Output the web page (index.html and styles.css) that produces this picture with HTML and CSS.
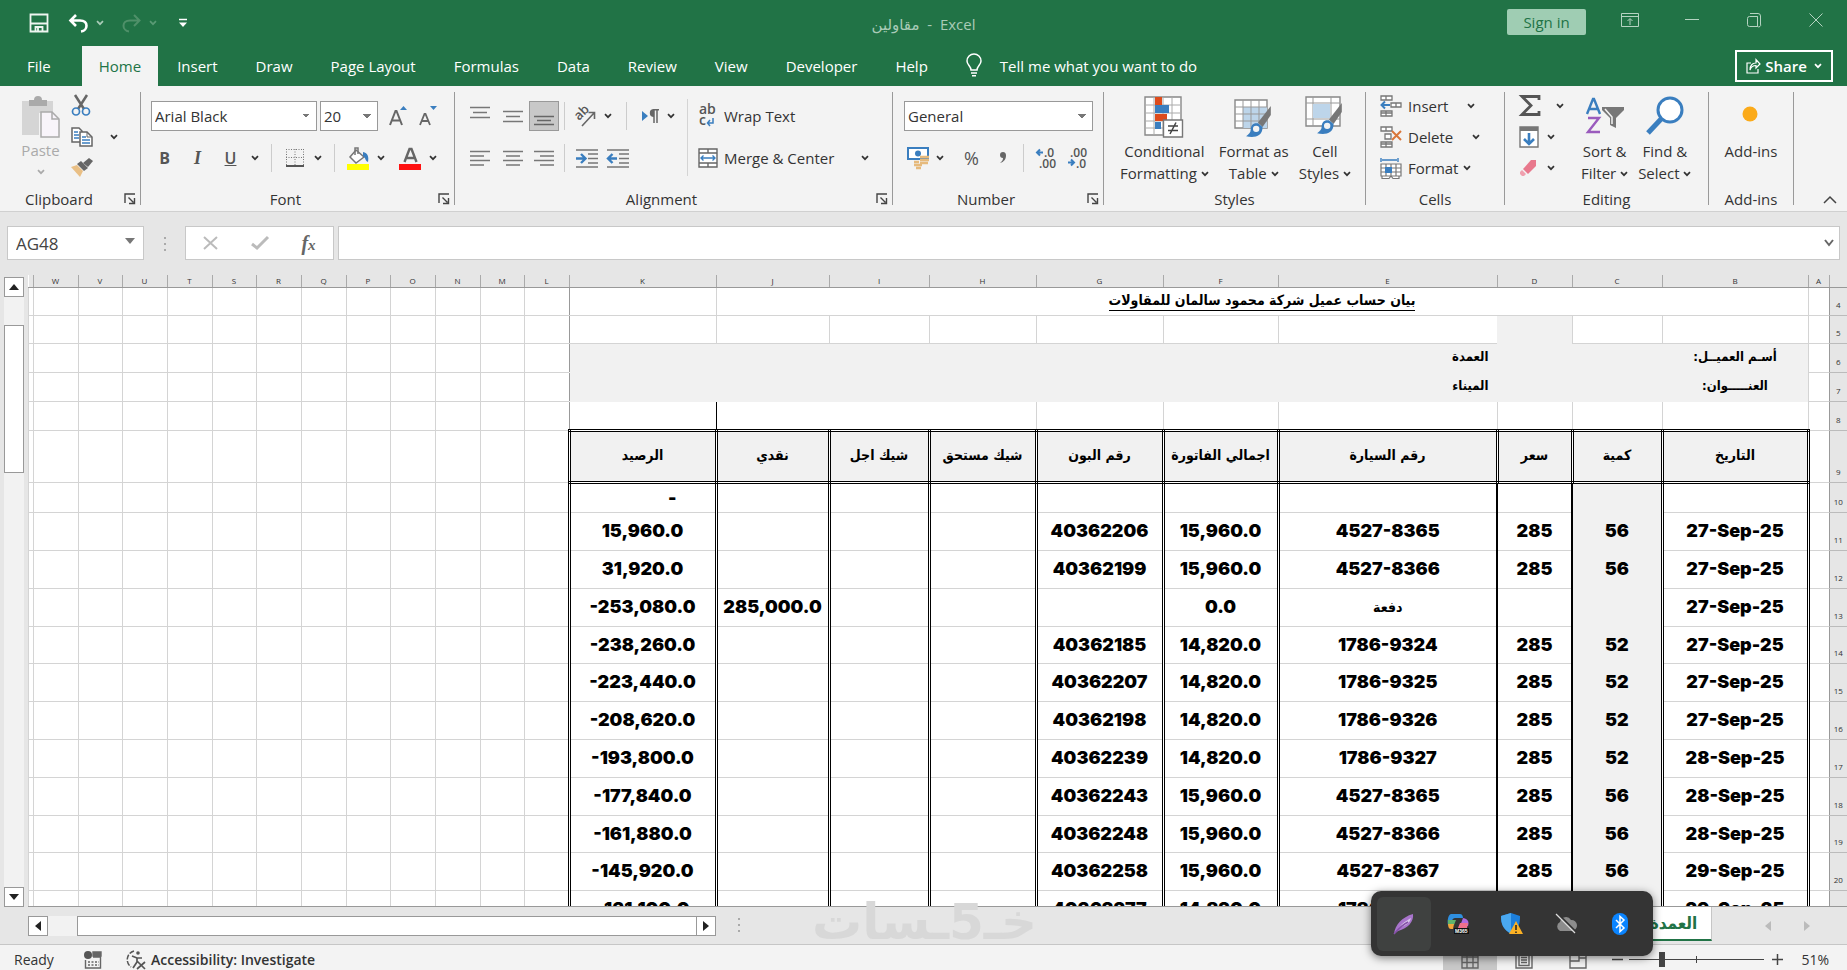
FILE: index.html
```html
<!DOCTYPE html>
<html lang="en">
<head>
    <meta charset="UTF-8">
    <meta name="viewport" content="width=device-width, initial-scale=1.0">
    <title>مقاولين - Excel</title>
    <link rel="stylesheet" href="styles.css">
</head>
<body>
    <svg class="defs" aria-hidden="true">
        <symbol id="caret" viewBox="0 0 8 6"><path d="M1 1.2l3 3 3-3" fill="none" stroke="currentColor" stroke-width="1.7"/></symbol>
        <symbol id="launcher" viewBox="0 0 12 12"><path d="M1 10V1h10M4.500 4.500l5 5M10.500 5v5.500H5" fill="none" stroke="#444" stroke-width="1.4"/></symbol>
        <symbol id="brush" viewBox="0 0 30 36">
            <path d="M29 1L15 19l5 5 9-13z" fill="#777"/>
            <path d="M15 20c-5-1-8 2-8 7 0 3-2 5-5 7 8 2 18 1 18-10z" fill="#3a7ebf"/>
            <circle cx="13" cy="26" r="3.500" fill="#f3f3f3"/>
        </symbol>
    </svg>

    <header class="titlebar">
        <div class="quick">
            <button class="qbtn" aria-label="Save"><svg width="20" height="20" viewBox="0 0 20 20"><path d="M1.500 1.500h17v17h-17zM2 10.500h16M6.500 18v-4h7v4M9 15v3" fill="none" stroke="#eef5f0" stroke-width="1.800"/></svg></button>
            <button class="qbtn" aria-label="Undo"><svg width="21" height="19" viewBox="0 0 21 19"><path d="M8 1L2.500 6.500 8 12M3 6.500h9c9 0 8 10 1 11" fill="none" stroke="#fff" stroke-width="2.600"/></svg></button>
            <svg class="caret light"><use href="#caret"/></svg>
            <button class="qbtn" aria-label="Redo"><svg width="21" height="19" viewBox="0 0 21 19"><path d="M13 1l5.500 5.500L13 12M18 6.500H9C0 6.500 1 16.500 8 17.500" fill="none" stroke="#4f9069" stroke-width="2"/></svg></button>
            <svg class="caret dim"><use href="#caret"/></svg>
            <button class="qbtn last" aria-label="Customize"><svg width="8" height="10" viewBox="0 0 8 10"><path d="M0 1.500h8" stroke="#fff" stroke-width="1.500"/><path d="M0 4.500h8L4 9z" fill="#fff"/></svg></button>
        </div>
        <div class="doc-title">مقاولين&nbsp; -&nbsp; Excel</div>
        <div class="win">
            <button class="signin">Sign in</button>
            <button class="wbtn" aria-label="Ribbon options"><svg width="18" height="14" viewBox="0 0 18 14"><path d="M.5.5h17v13H.5zM1 3.500h16M9 12V6M6.500 8L9 5.500 11.500 8" fill="none" stroke="#b5d3c1"/></svg></button>
            <button class="wbtn" aria-label="Minimize"><svg width="14" height="14" viewBox="0 0 14 14"><path d="M0 6.500h14" stroke="#b5d3c1"/></svg></button>
            <button class="wbtn" aria-label="Restore"><svg width="14" height="14" viewBox="0 0 14 14"><path d="M2.500 3.500h8v10h-8a2 2 0 0 1-2-2v-6a2 2 0 0 1 2-2zM3 .5h8a2.500 2.500 0 0 1 2.500 2.500v8a2 2 0 0 1-3 2.500v-10" fill="none" stroke="#b5d3c1"/></svg></button>
            <button class="wbtn" aria-label="Close"><svg width="14" height="14" viewBox="0 0 14 14"><path d="M.5.5l13 13M13.500.5l-13 13" stroke="#b5d3c1"/></svg></button>
        </div>
    </header>

    <nav class="tabs">
        <button class="tab file">File</button>
        <button class="tab active">Home</button>
        <button class="tab">Insert</button>
        <button class="tab">Draw</button>
        <button class="tab">Page Layout</button>
        <button class="tab">Formulas</button>
        <button class="tab">Data</button>
        <button class="tab">Review</button>
        <button class="tab">View</button>
        <button class="tab">Developer</button>
        <button class="tab">Help</button>
        <button class="tell"><svg width="16" height="23" viewBox="0 0 16 23"><path d="M5 16c0-4-4-5-4-9a7 7 0 0 1 14 0c0 4-4 5-4 9zM5 19h6M6 21.800h4" fill="none" stroke="#fff" stroke-width="1.500"/></svg>Tell me what you want to do</button>
        <button class="share"><svg width="15" height="16" viewBox="0 0 15 16"><path d="M5 5H1v10h11v-4M4 12c0-5 3-7 6-7V1.500L14 6l-4 4V7.500C7 7.500 5 9 4 12z" fill="none" stroke="#fff" stroke-width="1.200"/></svg>Share<svg class="caret"><use href="#caret"/></svg></button>
    </nav>

    <section class="ribbon">
        <div class="group clipboard">
            <div class="tools">
                <button class="paste">
                    <svg width="39" height="42" viewBox="0 0 39 42"><path d="M1 5h31v12H18v22H1z" fill="#d5d5d5"/><path d="M8 4h5a4 4 0 0 1 8 0h5v6H8z" fill="#aaa"/><path d="M20 16h11l7 7v18H20z" fill="#f8f4fa" stroke="#aaa" stroke-width="1.500"/><path d="M31 16v7h7" fill="none" stroke="#aaa" stroke-width="1.500"/></svg>
                    <span>Paste</span>
                    <svg class="caret"><use href="#caret"/></svg>
                </button>
                <div class="stack">
                    <button class="mini" aria-label="Cut"><svg width="20" height="21" viewBox="0 0 20 21"><path d="M4 0l9 14M16 0L7 14" stroke="#666" stroke-width="2.500"/><circle cx="5" cy="16.500" r="3.500" fill="none" stroke="#3a7ebf" stroke-width="1.700"/><circle cx="15" cy="16.500" r="3.500" fill="none" stroke="#3a7ebf" stroke-width="1.700"/></svg></button>
                    <button class="mini copy" aria-label="Copy"><svg width="22" height="20" viewBox="0 0 22 20"><path d="M1 1h7l3 3v11H1z" fill="#fff" stroke="#666" stroke-width="1.500"/><path d="M3 5h4M3 8h5M3 11h5" stroke="#3a7ebf" stroke-width="1.300"/><path d="M9 5h7l5 5v9H9z" fill="#fff" stroke="#666" stroke-width="1.500"/><path d="M16 5v5h5" fill="none" stroke="#666"/><path d="M11 10h4M11 13h8M11 16h8" stroke="#3a7ebf" stroke-width="1.300"/></svg><svg class="caret"><use href="#caret"/></svg></button>
                    <button class="mini" aria-label="Format Painter"><svg width="22" height="19" viewBox="0 0 22 19"><path d="M18 0l4 3-5 6-5-4z" fill="#666"/><path d="M10 3l7 7-4 3-7-7z" fill="#666"/><path d="M6 7l6 6-3 6L0 9z" fill="#e9bf85"/></svg></button>
                </div>
            </div>
            <div class="label">Clipboard<button class="launch" aria-label="Clipboard settings"><svg><use href="#launcher"/></svg></button></div>
        </div>

        <div class="group font">
            <div class="tools rows">
                <div class="row">
                    <select class="combo font-name" aria-label="Font"><option>Arial Black</option></select>
                    <select class="combo font-size" aria-label="Font size"><option>20</option></select>
                    <button class="tool" aria-label="Grow font"><svg width="18" height="22" viewBox="0 0 18 22"><path d="M1 20L6.500 6h1L13 20M3.500 15.500h7" fill="none" stroke="#666" stroke-width="2"/><path d="M11 5l3.500-4L18 5z" fill="#3a7ebf"/></svg></button>
                    <button class="tool" aria-label="Shrink font"><svg width="18" height="22" viewBox="0 0 18 22"><path d="M1 20L5.500 9h1L11 20M3 16h6" fill="none" stroke="#666" stroke-width="1.800"/><path d="M11 1l3.500 4L18 1z" fill="#3a7ebf"/></svg></button>
                </div>
                <div class="row">
                    <button class="tool wide bold">B</button>
                    <button class="tool wide italic">I</button>
                    <button class="tool wide under">U</button>
                    <svg class="caret"><use href="#caret"/></svg>
                    <i class="sep"></i>
                    <button class="tool" aria-label="Borders"><svg width="18" height="18" viewBox="0 0 18 18"><path d="M.5 0v16M17.500 0v16M0 .5h18M9 0v16M0 8.500h18" fill="none" stroke="#777" stroke-dasharray="1 1.500"/><path d="M0 17h18" stroke="#555" stroke-width="2"/></svg></button>
                    <svg class="caret"><use href="#caret"/></svg>
                    <i class="sep"></i>
                    <button class="tool" aria-label="Fill color"><svg width="23" height="23" viewBox="0 0 23 23"><path d="M9 3l8 7-8 6-6-6z" fill="#fff" stroke="#777" stroke-width="1.500"/><path d="M8 8V1h3v6" fill="none" stroke="#777" stroke-width="1.500"/><path d="M16 5c5 1 6 5 5 10-3-1-2-4-5-6z" fill="#3a7ebf"/><path d="M0 17h22v6H0z" fill="#ff0"/></svg></button>
                    <svg class="caret"><use href="#caret"/></svg>
                    <i class="gap"></i>
                    <button class="tool" aria-label="Font color"><svg width="23" height="23" viewBox="0 0 23 23"><path d="M5.500 15L10.500 2h2l5 13M8 11h7" fill="none" stroke="#666" stroke-width="2.400"/><path d="M0 17h22v6H0z" fill="#f11"/></svg></button>
                    <svg class="caret"><use href="#caret"/></svg>
                </div>
            </div>
            <div class="label">Font<button class="launch" aria-label="Font settings"><svg><use href="#launcher"/></svg></button></div>
        </div>

        <div class="group align">
            <div class="tools">
                <div class="rows">
                    <div class="row">
                        <button class="tool wide" aria-label="Top align"><svg width="20" height="20" viewBox="0 0 20 20"><path d="M0 1.500h20M3 6.500h14M0 11.500h20" stroke="#777" stroke-width="1.500"/></svg></button>
                        <button class="tool wide" aria-label="Middle align"><svg width="20" height="20" viewBox="0 0 20 20"><path d="M0 5.500h20M3 10.500h14M0 15.500h20" stroke="#777" stroke-width="1.500"/></svg></button>
                        <button class="tool pressed" aria-label="Bottom align"><svg width="20" height="20" viewBox="0 0 20 20"><path d="M0 10.500h20M3 14.500h14M0 18.500h20" stroke="#666" stroke-width="1.500"/></svg></button>
                        <i class="sep thin"></i>
                        <button class="tool" aria-label="Orientation"><svg width="24" height="24" viewBox="0 0 24 24"><text x="6" y="17" transform="rotate(-45 6 17)" class="icon-text" font-size="13">ab</text><path d="M9 22L21 9M15.500 8.500h6V15" fill="none" stroke="#666" stroke-width="1.600"/></svg></button>
                        <svg class="caret"><use href="#caret"/></svg>
                        <i class="sep"></i>
                        <button class="tool narrow" aria-label="Text direction"><svg width="17" height="14" viewBox="0 0 17 14"><path d="M0 2l6 5-6 5z" fill="#3a7ebf"/><path d="M12 0a4 3.800 0 0 0 0 8z" fill="#666"/><path d="M12 .7h5M12 0v14M15 0v14" stroke="#666" stroke-width="1.500"/></svg></button>
                        <svg class="caret"><use href="#caret"/></svg>
                    </div>
                    <div class="row">
                        <button class="tool wide" aria-label="Align left"><svg width="20" height="16" viewBox="0 0 20 16"><path d="M0 1.500h20M0 6h14M0 10.500h20M0 15h14" stroke="#777" stroke-width="1.500"/></svg></button>
                        <button class="tool wide" aria-label="Center"><svg width="20" height="16" viewBox="0 0 20 16"><path d="M0 1.500h20M3 6h14M0 10.500h20M3 15h14" stroke="#777" stroke-width="1.500"/></svg></button>
                        <button class="tool" aria-label="Align right"><svg width="20" height="16" viewBox="0 0 20 16"><path d="M0 1.500h20M6 6h14M0 10.500h20M6 15h14" stroke="#777" stroke-width="1.500"/></svg></button>
                        <i class="sep thin"></i>
                        <button class="tool wide" aria-label="Decrease indent"><svg width="22" height="19" viewBox="0 0 22 19"><path d="M0 1h22M12 5h10M12 9.500h10M12 14h10M0 18h22" stroke="#777" stroke-width="1.500"/><path d="M0 9.500h8M5 5l4.500 4.500L5 14" fill="none" stroke="#3a7ebf" stroke-width="2.400"/></svg></button>
                        <button class="tool" aria-label="Increase indent"><svg width="22" height="19" viewBox="0 0 22 19"><path d="M0 1h22M12 5h10M12 9.500h10M12 14h10M0 18h22" stroke="#777" stroke-width="1.500"/><path d="M2 9.500h8M5.500 5L1 9.500 5.500 14" fill="none" stroke="#3a7ebf" stroke-width="2.400"/></svg></button>
                    </div>
                </div>
                <div class="rows wrap">
                    <button class="text-tool"><svg width="20" height="22" viewBox="0 0 20 22"><text x="1" y="9" class="icon-text" font-size="14">ab</text><text x="1" y="20" class="icon-text" font-size="14">c</text><path d="M15 13v5H10M12 15l-2.500 3 2.500 3" fill="none" stroke="#3a7ebf" stroke-width="1.500"/></svg>Wrap Text</button>
                    <button class="text-tool"><svg width="20" height="20" viewBox="0 0 20 20"><path d="M1 1h18v18H1zM1 5h18M1 15h18M10 1v4M10 15v4" fill="#fff" stroke="#666" stroke-width="1.400"/><path d="M3 10h14M5.500 7.500L3 10l2.500 2.500M14.500 7.500L17 10l-2.500 2.500" fill="none" stroke="#3a7ebf" stroke-width="1.400"/></svg>Merge &amp; Center<svg class="caret far"><use href="#caret"/></svg></button>
                </div>
            </div>
            <div class="label">Alignment<button class="launch" aria-label="Alignment settings"><svg><use href="#launcher"/></svg></button></div>
        </div>

        <div class="group number">
            <div class="tools rows">
                <div class="row">
                    <select class="combo format" aria-label="Number format"><option>General</option></select>
                </div>
                <div class="row">
                    <button class="tool" aria-label="Accounting format"><svg width="23" height="22" viewBox="0 0 23 22"><path d="M1 1h20v11H1z" fill="#fff" stroke="#3a7ebf" stroke-width="2"/><circle cx="11" cy="6.500" r="3" fill="#3a7ebf"/><path d="M13 10h9M13 13h9M13 16h8M7 15h5M7 18h8M9 21h5" stroke="#e6ba7c" stroke-width="2.400"/></svg></button>
                    <svg class="caret"><use href="#caret"/></svg>
                    <button class="tool wide percent">%</button>
                    <button class="tool" aria-label="Comma style"><svg width="8" height="12" viewBox="0 0 8 12"><path d="M4 0a3 3 0 1 0 0 6c0 2-1 3.500-3 5 4-1 6-4 6-7.500C7 1.500 6 0 4 0z" fill="#666"/></svg></button>
                    <i class="sep thin"></i>
                    <button class="tool wide" aria-label="Increase decimal"><svg width="20" height="20" viewBox="0 0 20 20"><path d="M1 4.500h6M4 1.500L1 4.500l3 3" fill="none" stroke="#3a7ebf" stroke-width="2"/><text x="8" y="9" class="icon-text" font-size="12">.0</text><text x="3" y="20" class="icon-text" font-size="12">.00</text></svg></button>
                    <button class="tool" aria-label="Decrease decimal"><svg width="20" height="20" viewBox="0 0 20 20"><path d="M1 14.500h6M4 11.500l3 3-3 3" fill="none" stroke="#3a7ebf" stroke-width="2"/><text x="3" y="9" class="icon-text" font-size="12">.00</text><text x="9" y="20" class="icon-text" font-size="12">.0</text></svg></button>
                </div>
            </div>
            <div class="label">Number<button class="launch" aria-label="Number settings"><svg><use href="#launcher"/></svg></button></div>
        </div>

        <div class="group styles">
            <div class="tools">
                <button class="big">
                    <svg width="40" height="42" viewBox="0 0 40 42"><path d="M1 1h36v38H1z" fill="#fff" stroke="#888" stroke-width="1.400"/><path d="M1 9h36M1 17h36M1 25h36M1 32h36M10 1v38M19 1v38M28 1v38" stroke="#aaa"/><path d="M11 1h7v8h-7zM11 18h12v7H11z" fill="#dd4b1c"/><path d="M11 9h14v8H11zM11 26h6v7h-6z" fill="#3a7ebf"/><path d="M19.500 24h19v17h-19z" fill="#fff" stroke="#777" stroke-width="1.400"/><path d="M24 30h10M24 34.500h10M32 26.500l-6 11.500" stroke="#444" stroke-width="1.500"/></svg>
                    <span>Conditional<br>Formatting <svg class="caret"><use href="#caret"/></svg></span>
                </button>
                <button class="big">
                    <svg width="40" height="42" viewBox="0 0 40 42"><path d="M1 4h32v28H1z" fill="#fff" stroke="#888" stroke-width="1.400"/><path d="M9 11h24v21H9z" fill="#bdd5ea"/><path d="M1 11h32M1 18h32M1 25h32M9 4v28M17 4v28M25 4v28" stroke="#999"/><use href="#brush" x="9" y="9" width="30" height="33"/></svg>
                    <span>Format as<br>Table <svg class="caret"><use href="#caret"/></svg></span>
                </button>
                <button class="big">
                    <svg width="40" height="42" viewBox="0 0 40 42"><path d="M1 1h34v29H1z" fill="#fff" stroke="#888" stroke-width="1.400"/><path d="M1 7h34M1 23h34M8 1v29M26 1v29" stroke="#999"/><path d="M8 8h17v14H8z" fill="#bdd5ea"/><use href="#brush" x="9" y="6" width="30" height="33"/></svg>
                    <span>Cell<br>Styles <svg class="caret"><use href="#caret"/></svg></span>
                </button>
            </div>
            <div class="label">Styles</div>
        </div>

        <div class="group cells">
            <div class="tools stack">
                <button class="text-tool"><svg width="22" height="22" viewBox="0 0 22 22"><path d="M1 5V1h11v4zM6 1v4M1 21v-5h11v5zM6 16v5M1 18h11M11 8h10v4H11zM16 8v4" fill="#fff" stroke="#777" stroke-width="1.300"/><path d="M1 10h9M5 6.500L1.500 10 5 13.500" fill="none" stroke="#3a7ebf" stroke-width="2"/></svg>Insert<svg class="caret far"><use href="#caret"/></svg></button>
                <button class="text-tool"><svg width="22" height="22" viewBox="0 0 22 22"><path d="M1 5V1h11v4zM6 1v4M1 21v-5h11v5zM6 16v5M1 18h11M5 8h6v5H5z" fill="#fff" stroke="#777" stroke-width="1.300"/><path d="M12 5l9 9M21 5l-9 9" stroke="#d9763a" stroke-width="2"/></svg>Delete<svg class="caret far"><use href="#caret"/></svg></button>
                <button class="text-tool"><svg width="22" height="22" viewBox="0 0 22 22"><path d="M1 1v4M18 1v4M2 3h15" stroke="#3a7ebf" stroke-width="1.400"/><path d="M1 7h20v12H1zM1 11h20M1 15h20M6 7v12M11 7v12M16 7v12M2 19v2.500h7L11 19l2 2.500h6V19" fill="#fff" stroke="#777" stroke-width="1.200"/><path d="M5 10h7v6H5z" fill="#3a7ebf"/></svg>Format<svg class="caret near"><use href="#caret"/></svg></button>
            </div>
            <div class="label">Cells</div>
        </div>

        <div class="group editing">
            <div class="tools">
                <div class="stack">
                    <button class="mini" aria-label="AutoSum"><svg width="22" height="21" viewBox="0 0 22 21"><path d="M20 5V1.500H3L12 10.500 3 19.500h17V16" fill="none" stroke="#555" stroke-width="2.800"/></svg><svg class="caret far"><use href="#caret"/></svg></button>
                    <button class="mini" aria-label="Fill"><svg width="20" height="22" viewBox="0 0 20 22"><path d="M1 1h18v20H1z" fill="#fff" stroke="#777" stroke-width="1.400"/><path d="M1 1h18v4H1z" fill="#777"/><path d="M10 7v11M5 13l5 5 5-5" fill="none" stroke="#3a7ebf" stroke-width="2.600"/></svg><svg class="caret mid"><use href="#caret"/></svg></button>
                    <button class="mini" aria-label="Clear"><svg width="20" height="18" viewBox="0 0 20 18"><path d="M12 1h5v6l-8 8-5-5z" fill="#e8788c"/><path d="M3 11l4 4-2 2H3l-2-2v-2z" fill="#efa0ae"/></svg><svg class="caret mid"><use href="#caret"/></svg></button>
                </div>
                <button class="big">
                    <svg width="40" height="42" viewBox="0 0 40 42"><path d="M2 18L8 3h1l6 15M4.500 13h8" fill="none" stroke="#3a7ebf" stroke-width="2.400"/><path d="M3 22h11L3 36h12" fill="none" stroke="#9a5bbd" stroke-width="2.400"/><path d="M17 11h22v3l-8 8v10l-6-3v-7l-8-8z" fill="#777"/><path d="M20 13l7 8v7" fill="none" stroke="#f3f3f3" stroke-width="1.500"/></svg>
                    <span>Sort &amp;<br>Filter <svg class="caret"><use href="#caret"/></svg></span>
                </button>
                <button class="big">
                    <svg width="40" height="42" viewBox="0 0 40 42"><circle cx="25" cy="14" r="12" fill="#fff" stroke="#3a7ebf" stroke-width="3"/><path d="M17 22L3 37" stroke="#3a7ebf" stroke-width="5"/></svg>
                    <span>Find &amp;<br>Select <svg class="caret"><use href="#caret"/></svg></span>
                </button>
            </div>
            <div class="label">Editing</div>
        </div>

        <div class="group addins">
            <div class="tools">
                <button class="big">
                    <svg width="40" height="42" viewBox="0 0 40 42"><circle cx="19" cy="18" r="7.500" fill="#fbaa19"/></svg>
                    <span>Add-ins</span>
                </button>
            </div>
            <div class="label">Add-ins</div>
        </div>
        <button class="collapse" aria-label="Collapse ribbon"><svg width="14" height="8" viewBox="0 0 14 8"><path d="M1 7l6-6 6 6" fill="none" stroke="#444" stroke-width="1.500"/></svg></button>
    </section>

    <section class="formula">
        <div class="namebox"><input type="text" value="AG48" aria-label="Name box"><button aria-label="Names"><svg width="10" height="6" viewBox="0 0 10 6"><path d="M0 0h10L5 6z" fill="#777"/></svg></button></div>
        <div class="dots"></div>
        <div class="fx">
            <button aria-label="Cancel"><svg width="15" height="14" viewBox="0 0 15 14"><path d="M1 1l13 12M14 1L1 13" stroke="#bbb" stroke-width="2"/></svg></button>
            <button aria-label="Enter"><svg width="18" height="14" viewBox="0 0 18 14"><path d="M1 8l5 4L17 1" fill="none" stroke="#bbb" stroke-width="3"/></svg></button>
            <button class="fn">f<small>x</small></button>
        </div>
        <div class="formula-input"><input type="text" aria-label="Formula bar"><button aria-label="Expand"><svg width="10" height="8" viewBox="0 0 10 8"><path d="M1 1l4 5 4-5" fill="none" stroke="#666" stroke-width="2"/></svg></button></div>
    </section>

    <main class="workspace">
        <div class="vscroll">
            <button aria-label="Scroll up"><svg width="10" height="6" viewBox="0 0 10 6"><path d="M0 6h10L5 0z" fill="#222"/></svg></button>
            <div class="vtrack"><div class="vthumb"></div></div>
            <button aria-label="Scroll down"><svg width="10" height="6" viewBox="0 0 10 6"><path d="M0 0h10L5 6z" fill="#222"/></svg></button>
        </div>
        <div class="sheet" dir="rtl">
            <table id="grid"></table>
        </div>
    </main>

    <section class="sheetbar">
        <div class="hscroll">
            <button aria-label="Scroll left"><svg width="6" height="10" viewBox="0 0 6 10"><path d="M6 0v10L0 5z" fill="#222"/></svg></button>
            <div class="htrack"><div class="hthumb"></div></div>
            <button aria-label="Scroll right"><svg width="6" height="10" viewBox="0 0 6 10"><path d="M0 0v10l6-5z" fill="#222"/></svg></button>
        </div>
        <div class="dots"></div>
        <div class="watermark" dir="rtl">خـ5ـسات</div>
        <button class="sheet-tab">العمدة</button>
        <div class="sheet-nav">
            <svg width="6" height="10" viewBox="0 0 6 10"><path d="M6 0v10L0 5z" fill="#bbb"/></svg>
            <svg width="6" height="10" viewBox="0 0 6 10"><path d="M0 0v10l6-5z" fill="#bbb"/></svg>
        </div>
    </section>

    <footer class="status">
        <span class="ready">Ready</span>
        <svg width="18" height="18" viewBox="0 0 18 18"><circle cx="4" cy="4" r="4" fill="#555"/><path d="M9 1h8v4H9zM1.500 9v8h15V6H9" fill="none" stroke="#666" stroke-width="1.400"/><path d="M9 1h8v4H9z" fill="#666"/><path d="M4 11h11M4 14h11" stroke="#666" stroke-width="1.500" stroke-dasharray="2 1.500"/></svg>
        <button class="access"><svg width="20" height="20" viewBox="0 0 20 20"><path d="M8 1A9 9 0 0 0 5 17" fill="none" stroke="#555" stroke-width="1.500" stroke-dasharray="5 1.500"/><circle cx="12" cy="3" r="1.800" fill="#555"/><path d="M6 6l5 2h5M11 8v4l-4 6M11 11l8 8M19 12l-8 7" fill="none" stroke="#555" stroke-width="1.700"/></svg>Accessibility: Investigate</button>
        <div class="views">
            <button class="view on" aria-label="Normal"><svg width="18" height="18" viewBox="0 0 18 18"><path d="M1 1h16v16H1zM1 6h16M1 11.500h16M6 1v16M12 1v16" fill="none" stroke="#666" stroke-width="1.400"/></svg></button>
            <button class="view" aria-label="Page layout"><svg width="18" height="18" viewBox="0 0 18 18"><path d="M1 1h16v16H1zM4 3.500h10v11H4zM6 6.500h6M6 9h6M6 11.500h6" fill="none" stroke="#666" stroke-width="1.400"/></svg></button>
            <button class="view" aria-label="Page break"><svg width="18" height="18" viewBox="0 0 18 18"><path d="M1 1h16v16H1zM1 10h9V1M10 7h7" fill="none" stroke="#666" stroke-width="1.400"/></svg></button>
        </div>
        <button class="zbtn" aria-label="Zoom out"><svg width="11" height="11" viewBox="0 0 11 11"><path d="M0 5.500h11" stroke="#444" stroke-width="1.500"/></svg></button>
        <input class="zoom" type="range" min="0" max="100" value="23" aria-label="Zoom">
        <button class="zbtn" aria-label="Zoom in"><svg width="11" height="11" viewBox="0 0 11 11"><path d="M0 5.500h11M5.500 0v11" stroke="#444" stroke-width="1.500"/></svg></button>
        <span class="percent-label">51%</span>
    </footer>

    <div class="tray">
        <button class="on" aria-label="Feather"><svg width="22" height="22" viewBox="0 0 22 22"><path d="M1 21C2 12 9 4 20 1c1 8-5 14-15 17z" fill="#a874cc"/><path d="M6 15C9 10 13 8 18 5c-1 5-6 8-12 10z" fill="#d6c8e8"/><path d="M1 21C6 15 11 11 15 9" fill="none" stroke="#8550a8" stroke-width="1.500"/></svg></button>
        <button aria-label="Copilot"><svg width="22" height="22" viewBox="0 0 22 22"><path d="M4 1h9c2 0 3 2 3 4H8c-3 0-3 4-7 7C0 8 1 2 4 1z" fill="#2f8fe0"/><path d="M1 7h8l-2 5H1z" fill="#5fb46c"/><path d="M1 11h6l-1 5H4c-2 0-3-2-3-5z" fill="#f0a63c"/><path d="M16 5c6 1 6 5 5 8h-8z" fill="#b06be0"/><path d="M13 10h8l-1 5h-9z" fill="#f0708c"/><path d="M7 15h15v6H7z" fill="#111"/><text x="8" y="20" font-size="5" class="m365">M365</text></svg></button>
        <button aria-label="Security"><svg width="22" height="22" viewBox="0 0 22 22"><path d="M10 0l9 3c0 8-1 13-9 18C2 16 0 11 0 3z" fill="#1c7fdc"/><path d="M10 0v21C2 16 0 11 0 3z" fill="#4aa8f0"/><path d="M15 8l7 13H8z" fill="#fbb124"/><path d="M15 12v5M15 18.500v1.500" stroke="#222" stroke-width="1.500"/></svg></button>
        <button aria-label="Cloud sync off"><svg width="22" height="22" viewBox="0 0 22 22"><path d="M5 18a5 5 0 0 1 0-9 6 6 0 0 1 11-2 5.500 5.500 0 0 1 1 11z" fill="#8c8c8c"/><path d="M3 1l19 19" stroke="#333" stroke-width="2"/><path d="M1 1l19 19" stroke="#ddd" stroke-width="1.300"/></svg></button>
        <button aria-label="Bluetooth"><svg width="18" height="22" viewBox="0 0 18 22"><rect x="1" width="16" height="22" rx="8" fill="#0a84ff"/><path d="M5 7l8 8-4 3.500v-15L13 7l-8 8" fill="none" stroke="#fff" stroke-width="1.500"/></svg></button>
    </div>
    <script src="script.js"></script>
</body>
</html>
```

FILE: styles.css
```css
* { box-sizing: border-box; }
body {
    margin: 0;
    height: 100vh;
    display: flex;
    flex-direction: column;
    overflow: hidden;
    font-family: "Open Sans", "Noto Sans", "DejaVu Sans", sans-serif;
    font-size: 15px;
    color: #333;
    background: #e6e6e6;
}
button {
    font: inherit;
    color: inherit;
    background: none;
    border: 0;
    padding: 0;
    display: flex;
    align-items: center;
    justify-content: center;
    white-space: nowrap;
}
svg { overflow: visible; }
.defs { position: absolute; width: 0; height: 0; }
.caret { width: 8px; height: 6px; margin: 0 4px; flex: none; }
.caret.light { color: #a9cbb7; }
.caret.dim { color: #5a9a75; }

/* title bar */
.titlebar {
    height: 46px;
    background: #217346;
    display: grid;
    grid-template-columns: 1fr auto 1fr;
}
.quick { display: flex; align-items: center; padding: 0 0 2px 28px; }
.qbtn { width: 22px; margin-right: 17px; }
.qbtn + .caret { margin-left: -10px; margin-right: 16px; }
.qbtn.last { margin-left: -1px; }
.doc-title { line-height: 48px; color: #a9cbb7; font-size: 15px; }
.win { display: flex; justify-content: flex-end; align-items: flex-start; }
.signin {
    width: 79px;
    height: 26px;
    margin: 9px 13px 0 0;
    border-radius: 2px;
    background: #9fcdb3;
    color: #217346;
}
.wbtn { width: 62px; height: 40px; }

/* tabs */
.tabs { height: 40px; background: #217346; display: flex; color: #fff; padding-bottom: 1px; }
.tab { padding: 0 19px; }
.tab.file { padding: 0 31px 0 27px; }
.tab.active { background: #f3f3f3; color: #217346; padding: 0 17px; margin-bottom: -1px; }
.tell { gap: 18px; padding-left: 19px; }
.share {
    width: 98px;
    height: 32px;
    margin: 4px 14px 0 auto;
    border: 2px solid #fff;
    gap: 4px;
    font-weight: 600;
}
.share .caret { margin: 0 0 0 3px; }

/* ribbon */
.ribbon {
    height: 126px;
    flex: none;
    display: flex;
    background: #f3f3f3;
    border-bottom: 1px solid #d0d0d0;
    padding: 6px 0;
}
.group {
    display: flex;
    flex-direction: column;
    border-right: 1px solid #999;
    flex: none;
}
.tools { flex: 1; display: flex; }
.rows { display: flex; flex-direction: column; padding-top: 9px; gap: 12px; }
.row { display: flex; align-items: center; height: 30px; }
.label {
    position: relative;
    height: 20px;
    line-height: 20px;
    margin-bottom: -4px;
    text-align: center;
}
.launch { position: absolute; right: 4px; top: 4px; }
.launch svg { width: 12px; height: 12px; }
.tool { width: 30px; height: 30px; flex: none; }
.tool.wide { width: 33px; }
.tool.narrow { width: 26px; }
.tool.pressed { background: #c8c8c8; border: 1px solid #999; }
.bold { font-weight: 700; color: #555; font-size: 16px; }
.italic { font-family: "Liberation Serif", serif; font-style: italic; font-weight: 700; font-size: 18px; color: #555; }
.under { text-decoration: underline; font-weight: 600; font-size: 16px; color: #555; }
.percent { font-size: 18px; color: #555; }
.sep { width: 1px; height: 28px; background: #ccc; margin: 0 8px; flex: none; }
.gap { width: 6px; flex: none; }
.combo {
    appearance: none;
    height: 30px;
    border: 1px solid #999;
    border-radius: 0;
    padding: 0 3px;
    font: inherit;
    color: #333;
    background:
        linear-gradient(to top right, transparent 50%, #777 50%) no-repeat right 10px center / 4px 4px,
        linear-gradient(to top left, transparent 50%, #777 50%) no-repeat right 6px center / 4px 4px,
        #fff;
}
.font-name { width: 166px; margin-right: 3px; }
.font-size { width: 58px; margin-right: 5px; }
.format { width: 189px; }
.icon-text { fill: #555; font-family: "Open Sans", sans-serif; font-weight: 600; }
.text-tool { height: 30px; justify-content: flex-start; gap: 6px; }
.text-tool .far { margin-left: 13px; }

.clipboard { width: 141px; }
.clipboard .label { padding-right: 22px; }
.paste { flex-direction: column; justify-content: flex-start; width: 39px; margin-left: 21px; color: #aaa; padding-top: 4px; }
.paste .caret { margin-top: 7px; }
.paste span { line-height: 24px; }
.stack { display: flex; flex-direction: column; margin-top: -2px; }
.clipboard .stack { margin-left: 11px; }
.mini { height: 31px; justify-content: flex-start; }
.copy { gap: 13px; }
.font { width: 314px; }
.font .rows .row { padding-left: 7px; }
.font .rows .row:first-child { padding-left: 10px; }
.font .label, .align .label, .number .label { padding-right: 24px; }
.align { width: 438px; }
.align .rows { padding-left: 8px; }
.align .sep { margin: 0 10px; }
.align .sep.thin { margin: 0 5px; }
.align .wrap { border-left: 1px solid #d4d4d4; margin: 7px 0 13px 8px; padding: 2px 0 0 10px; }
.wrap .text-tool .far { margin-left: 21px; }
.number { width: 211px; }
.number .row { padding-left: 11px; }
.number .sep.thin { margin: 0 5px; }
.number .tool:first-child { width: 28px; }
.number .tool.percent { margin-left: 7px; }

.big { flex-direction: column; justify-content: flex-start; padding: 4px 5px 0; line-height: 22px; gap: 2px; }
.big .caret { display: inline-block; margin: 0; vertical-align: 2px; }
.styles { width: 262px; }
.styles .tools { padding-left: 11px; }
.cells { width: 139px; }
.cells .tools { padding-left: 14px; }
.cells .text-tool { height: 31px; }
.text-tool .near { margin-left: -1px; }
.editing { width: 204px; }
.editing .tools { padding-left: 14px; }
.editing .mini .far { margin-left: 15px; }
.editing .mini .mid { margin-left: 8px; }
.editing .stack { width: 57px; }
.addins { width: 85px; }
.addins .tools { justify-content: center; }
.collapse { margin: auto 10px 0 auto; height: 10px; }

/* formula bar */
.formula { height: 63px; flex: none; display: flex; align-items: flex-start; padding: 14px 7px 0; }
.formula > div { height: 34px; }
.namebox, .fx, .formula-input { display: flex; background: #fff; border: 1px solid #c8c8c8; }
.formula input { border: 0; background: none; outline: 0; font: inherit; font-size: 17px; color: #444; min-width: 0; flex: 1; padding: 0 8px; }
.namebox { width: 137px; }
.namebox button { width: 26px; padding-bottom: 4px; }
.dots {
    width: 41px;
    padding: 11px 0 9px;
    background: linear-gradient(#aaa 2px, transparent 2px) top center / 2px 6px repeat-y content-box;
}
.fx { width: 149px; margin-right: 4px; }
.fx button { flex: 1; }
.fx .fn { font-family: "Liberation Serif", serif; font-style: italic; font-weight: 700; font-size: 20px; color: #666; }
.fn small { font-size: 15px; padding-top: 5px; }
.formula-input { flex: 1; }
.formula-input button { width: 20px; }

/* sheet */
.workspace { flex: 1; min-height: 0; display: flex; }
.vscroll { width: 28px; padding: 2px 4px 0; display: flex; flex-direction: column; flex: none; }
.vscroll button, .hscroll button { width: 20px; height: 20px; background: #fff; border: 1px solid #999; flex: none; }
.vtrack { flex: 1; background: #f2f2f2; padding-top: 28px; }
.vthumb { height: 148px; background: #fff; border: 1px solid #999; }
.sheet { flex: 1; min-width: 0; overflow: hidden; border-bottom: 1px solid #999; }
table { width: 100%; table-layout: fixed; border-collapse: collapse; background: #fff; }
td, th { padding: 0; overflow: hidden; white-space: nowrap; text-align: center; line-height: 20px; }
td { border: 1px solid #d4d4d4; }
thead th {
    height: 12px;
    background: #e6e6e6;
    border-left: 1px solid #aaa;
    border-bottom: 1px solid #999;
    font-size: 8px;
    font-weight: 400;
    line-height: 11px;
}
thead th:last-child { border-left: 0; }
.rownum {
    background: #e6e6e6;
    border-left: 1px solid #999;
    border-bottom: 1px solid #bbb;
    font-size: 8px;
    font-weight: 400;
    line-height: 12px;
    vertical-align: bottom;
    padding-bottom: 4px;
}
.title, .shade, .head { font-family: "DejaVu Sans Condensed", "DejaVu Sans", sans-serif; font-weight: 700; color: #000; }
.title { font-size: 14px; padding-bottom: 2px; }
.title span { border-bottom: 1px solid #000; display: inline-block; }
.shade { background: #f1f1f1; border-color: #f1f1f1; font-size: 13px; padding-bottom: 2px; }
.shade.start { text-align: right; padding-right: 8px; }
.shade.edge, .edge { border-left: 1px solid #999; }
.mark { border-left: 1px solid #000; }
.head { background: #f1f1f1; border: 3px double #000; font-size: 14px; padding-bottom: 2px; }
.data {
    font-family: Inter, "DejaVu Sans", sans-serif;
    font-weight: 900;
    font-size: 18px;
    color: #000;
    border-left: 3px double #000;
    border-right: 3px double #000;
}
.data.e { border-right: 2px solid #000; }
.data.d { border-left: 2px solid #000; border-right: 2px solid #000; }
.data.c { border-left: 2px solid #000; background: #f1f1f1; border-top-color: #f1f1f1; border-bottom-color: #f1f1f1; }
.data.dash { text-align: right; padding-right: 38px; }
.data.word { font-family: "DejaVu Sans Condensed", "DejaVu Sans", sans-serif; font-size: 14px; font-weight: 700; }

/* sheet tabs */
.sheetbar { position: relative; height: 38px; flex: none; display: flex; border-bottom: 1px solid #c6c6c6; }
.hscroll { width: 688px; height: 20px; margin: 9px 0 0 28px; display: flex; }
.htrack { flex: 1; background: #f2f2f2; padding-left: 29px; }
.hthumb { height: 20px; background: #fff; border: 1px solid #999; border-right: 0; }
.sheetbar .dots { width: 46px; }
.watermark { position: absolute; left: 812px; top: -10px; font: bold 50px "DejaVu Sans", sans-serif; line-height: 50px; color: #d8d8d8; }
.sheet-tab {
    margin-left: auto;
    width: 84px;
    height: 34px;
    background: #fff;
    border-bottom: 2px solid #217346;
    border-right: 1px solid #c6c6c6;
    color: #217346;
    font: bold 17px "DejaVu Sans Condensed", "DejaVu Sans", sans-serif;
    padding-left: 8px;
}
.sheet-nav { width: 135px; display: flex; align-items: center; gap: 33px; padding-left: 53px; }

/* status bar */
.status { height: 25px; flex: none; background: #f3f3f3; display: flex; align-items: center; padding: 4px 18px 0 14px; font-size: 14px; }
.ready { width: 70px; }
.access { margin-left: 24px; gap: 5px; font-weight: 600; }
.views { display: flex; margin-left: auto; }
.view { width: 54px; height: 25px; margin-top: -4px; padding-top: 4px; }
.view.on { background: #c8c8c8; }
.zbtn { width: 20px; height: 20px; margin-left: 2px; }
.zoom {
    appearance: none;
    width: 135px;
    height: 16px;
    margin: 0 1px 0 2px;
    background: linear-gradient(#444, #444) no-repeat center / 1px 7px, linear-gradient(#444, #444) no-repeat center / 100% 1px;
}
.zoom::-webkit-slider-thumb { appearance: none; width: 6px; height: 15px; background: #444; }
.percent-label { margin-left: 14px; }

.tray {
    position: absolute;
    right: 194px;
    bottom: 14px;
    height: 65px;
    display: flex;
    padding: 6px;
    border-radius: 10px;
    background: #343434;
    box-shadow: 0 2px 8px rgba(0, 0, 0, 0.5);
}
.tray button { width: 54px; height: 54px; border-radius: 6px; }
.tray .on { background: #3f4140; }
.m365 { fill: #fff; font-family: "Liberation Sans", sans-serif; font-weight: 700; }
```

FILE: script.js
```js
// columns run right to left: row numbers, A, B ... W, X
const columns = [
    ['A', 21], ['B', 146], ['C', 90], ['D', 75], ['E', 219], ['F', 115], ['G', 127],
    ['H', 107], ['I', 100], ['J', 113], ['K', 147],
    ['L', 45], ['M', 44], ['N', 45], ['O', 45], ['P', 44], ['Q', 45],
    ['R', 45], ['S', 44], ['T', 45], ['U', 45], ['V', 44], ['W', 45]
];
const rest = '<td></td>'.repeat(13);
const headings = ['التاريخ', 'كمية', 'سعر', 'رقم السيارة', 'اجمالي الفاتورة', 'رقم البون', 'شيك مستحق', 'شيك اجل', 'نقدي', 'الرصيد'];

// B C D E F G H I J K
const rows = [
    ['', '', '', '', '', '', '', '', '', '-'],
    ['27-Sep-25', '56', '285', '4527-8365', '15,960.0', '40362206', '', '', '', '15,960.0'],
    ['27-Sep-25', '56', '285', '4527-8366', '15,960.0', '40362199', '', '', '', '31,920.0'],
    ['27-Sep-25', '', '', 'دفعة', '0.0', '', '', '', '285,000.0', '-253,080.0'],
    ['27-Sep-25', '52', '285', '1786-9324', '14,820.0', '40362185', '', '', '', '-238,260.0'],
    ['27-Sep-25', '52', '285', '1786-9325', '14,820.0', '40362207', '', '', '', '-223,440.0'],
    ['27-Sep-25', '52', '285', '1786-9326', '14,820.0', '40362198', '', '', '', '-208,620.0'],
    ['28-Sep-25', '52', '285', '1786-9327', '14,820.0', '40362239', '', '', '', '-193,800.0'],
    ['28-Sep-25', '56', '285', '4527-8365', '15,960.0', '40362243', '', '', '', '-177,840.0'],
    ['28-Sep-25', '56', '285', '4527-8366', '15,960.0', '40362248', '', '', '', '-161,880.0'],
    ['29-Sep-25', '56', '285', '4527-8367', '15,960.0', '40362258', '', '', '', '-145,920.0'],
    ['29-Sep-25', '52', '285', '1786-9328', '14,820.0', '40362277', '', '', '', '-131,100.0']
];
const heights = { 4: 28, 5: 28, 6: 29, 7: 29, 8: 29, 9: 52, 10: 30, 14: 37, 19: 37 };

function row(n, cells) {
    return `<tr style="height:${heights[n] || 38}px"><th class="rownum">${n}</th><td></td>${cells}${rest}</tr>`;
}

function dataCell(text, i) {
    let cls = 'data ' + 'bcdefghijk'[i];
    if (text === '-') cls += ' dash';
    if (text === 'دفعة') return `<td class="${cls} word">${text}</td>`;
    return `<td class="${cls}">${text && `<bdi dir="ltr">${text}</bdi>`}</td>`;
}

let html = '<colgroup><col style="width:18px">';
columns.forEach(([, w]) => html += `<col style="width:${w}px">`);
html += '<col></colgroup><thead><tr><th></th>';
columns.forEach(([name]) => html += `<th>${name}</th>`);
html += '<th></th></tr></thead><tbody>';

const infoRow = (name, value) =>
    `<td class="shade">${name}</td><td class="shade"></td><td class="shade"></td><td class="shade start">${value}</td>` +
    '<td class="shade"></td>'.repeat(5) + '<td class="shade edge"></td>';

html += row(4, '<td class="title" colspan="9"><span>بيان حساب عميل شركة محمود سالمان للمقاولات</span></td><td class="edge"></td>');
html += row(5, '<td></td><td></td><td class="shade"></td>' + '<td></td>'.repeat(6) + '<td class="edge"></td>');
html += row(6, infoRow('أسـم العميــل:', 'العمدة'));
html += row(7, infoRow('العنـــــوان:', 'الميناء'));
html += row(8, '<td></td>'.repeat(6) + '<td class="mark" colspan="3"></td><td class="edge"></td>');
html += row(9, headings.map((h) => `<td class="head">${h}</td>`).join(''));
rows.forEach((r, i) => html += row(10 + i, r.map(dataCell).join('')));
document.getElementById('grid').innerHTML = html + '</tbody>';
```
